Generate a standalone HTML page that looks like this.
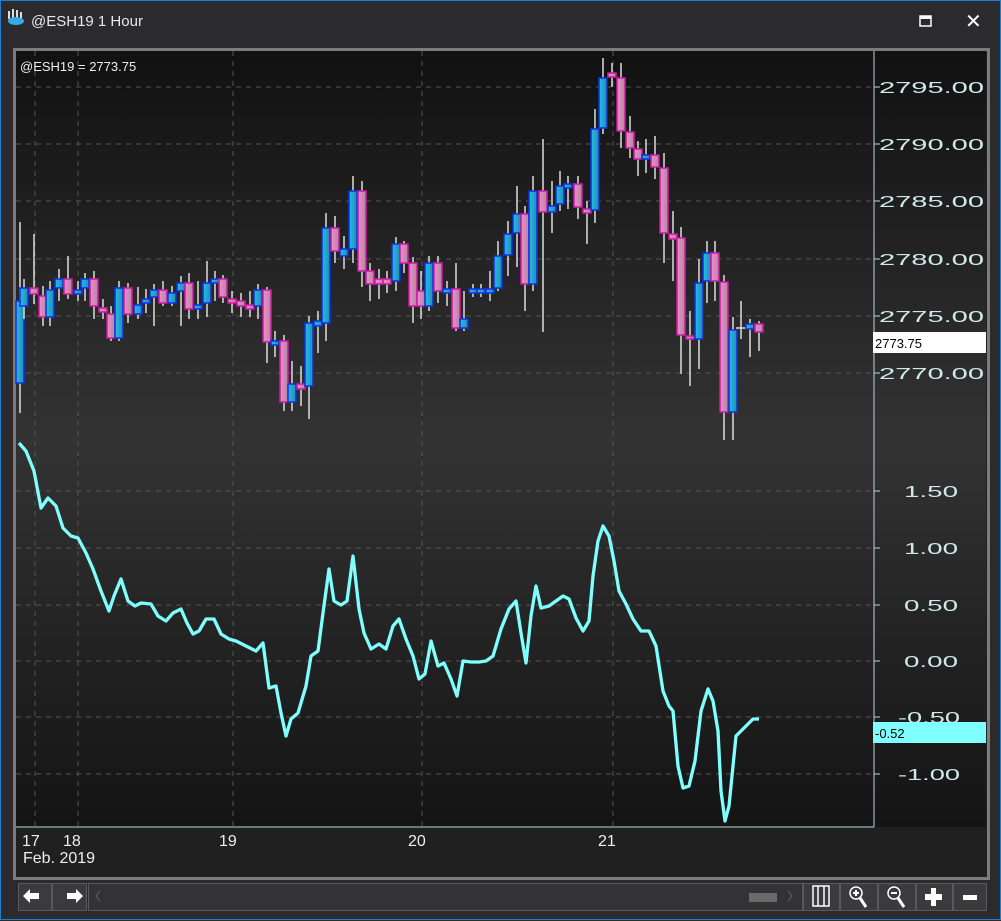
<!DOCTYPE html>
<html><head><meta charset="utf-8"><style>
*{margin:0;padding:0;box-sizing:border-box}
body{width:1001px;height:920px;background:#2b2b2d;font-family:"Liberation Sans",sans-serif;overflow:hidden;position:relative}
.win{position:absolute;left:0;top:0;width:1001px;height:920px;border:1px solid #1e7fd0;background:#2b2b2d}
.title{position:absolute;left:30px;top:12px;color:#e8e8e8;font-size:15px}
.frame{position:absolute;left:12px;top:47px;width:977px;height:832px;border:3px solid #7c7c7c;background:#222}
.tb{position:absolute;top:882px;height:28px;background:#3b3b3e;border:1px solid #5a5a5a;color:#fff}
</style></head><body><div class="win">
<svg style="position:absolute;left:5px;top:6px" width="20" height="22" viewBox="0 0 20 22"><path d="M3 4v8M7 2v10M11 3v9M15 5v7" stroke="#ddd" stroke-width="2"/><ellipse cx="10" cy="14" rx="8" ry="4" fill="#3aa8e8"/></svg>
<div class="title">@ESH19 1 Hour</div>
<svg style="position:absolute;left:918px;top:14px" width="14" height="14"><rect x="1" y="1" width="11" height="10" fill="none" stroke="#fff" stroke-width="1.5"/><rect x="1" y="1" width="11" height="3" fill="#fff"/></svg>
<div style="position:absolute;left:964px;top:8px;color:#fff;font-size:20px">✕</div>
<div class="frame"></div>
<svg id="c" style="position:absolute;left:0;top:0" width="1001" height="920">
<defs>
<linearGradient id="bg" x1="0" y1="0" x2="0" y2="1"><stop offset="0" stop-color="#111"/><stop offset="0.5" stop-color="#333"/><stop offset="1" stop-color="#141414"/></linearGradient>
<linearGradient id="bl" x1="0" x2="1"><stop offset="0" stop-color="#1cc0ec"/><stop offset="1" stop-color="#2a8ab0"/></linearGradient>
<linearGradient id="pk" x1="0" x2="1"><stop offset="0" stop-color="#f08cc8"/><stop offset="1" stop-color="#b08aa0"/></linearGradient>
</defs>
<rect x="15" y="50" width="858" height="776" fill="url(#bg)"/>
<rect x="873" y="50" width="112" height="776" fill="url(#bg)"/>
<rect x="15" y="826" width="970" height="50" fill="#202020"/>
<g id="grid" stroke="#555" stroke-dasharray="5,5" stroke-width="1"></g>
<g id="cand"></g>
<polyline id="ind" fill="none" stroke="#80ffff" stroke-width="3.3" stroke-linejoin="round"/>
<line x1="873" y1="50" x2="873" y2="826" stroke="#b8d8d8"/>
<line x1="15" y1="826" x2="873" y2="826" stroke="#b8d8d8"/>
<g id="ax" fill="#cfe8e8" font-size="16"></g>
<text x="19" y="70" fill="#eee" font-size="13">@ESH19 = 2773.75</text>
<rect x="872" y="331" width="113" height="21" fill="#fff"/>
<text x="874" y="347" fill="#000" font-size="13">2773.75</text>
<rect x="872" y="721" width="113" height="21" fill="#80ffff"/>
<text x="874" y="737" fill="#000" font-size="13">-0.52</text>
<g fill="#eee" font-size="16"><text x="21" y="845">17</text><text x="62" y="845">18</text><text x="218" y="845">19</text><text x="407" y="845">20</text><text x="597" y="845">21</text><text x="22" y="862">Feb. 2019</text></g>
</svg>
<div class="tb" style="left:17px;width:34px"></div>
<div class="tb" style="left:51px;width:35px"></div>
<div class="tb" style="left:87px;width:715px;background:#333336"></div>
<div style="position:absolute;left:748px;top:892px;width:28px;height:9px;background:#6a6a6a"></div>
<div class="tb" style="left:802px;width:37px"></div>
<div class="tb" style="left:839px;width:38px"></div>
<div class="tb" style="left:877px;width:38px"></div>
<div class="tb" style="left:915px;width:37px"></div>
<div class="tb" style="left:952px;width:34px"></div>
<svg style="position:absolute;left:0;top:880px" width="1001" height="32">
<g fill="#fff"><path d="M22 15l7-7v4h9v6h-9v4z"/><path d="M82 15l-7-7v4h-9v6h9v4z"/></g>
<path d="M99 10l-4 5 4 5" stroke="#666" fill="none"/><path d="M787 10l4 5-4 5" stroke="#666" fill="none"/>
<g stroke="#fff" fill="none" stroke-width="1.5"><rect x="812" y="5" width="16" height="20"/><line x1="817" y1="5" x2="817" y2="25"/><line x1="823" y1="5" x2="823" y2="25"/>
<circle cx="855" cy="12" r="6"/><line x1="859" y1="17" x2="865" y2="26" stroke-width="3"/><circle cx="893" cy="12" r="6"/><line x1="897" y1="17" x2="903" y2="26" stroke-width="3"/></g>
<g fill="#fff"><rect x="852" y="11" width="6" height="2"/><rect x="854" y="9" width="2" height="6"/><rect x="890" y="11" width="6" height="2"/><rect x="930" y="7" width="5" height="18"/><rect x="924" y="13" width="17" height="6"/><rect x="962" y="14" width="14" height="5"/></g>
</svg>
</div>
<script>
var ns="http://www.w3.org/2000/svg";
function el(p,t,a,txt){var e=document.createElementNS(ns,t);for(var k in a)e.setAttribute(k,a[k]);if(txt)e.textContent=txt;document.getElementById(p).appendChild(e);}
[86,143,200,258,315,372,490,547,604,660,716,773].forEach(function(y){el("grid","line",{x1:15,x2:873,y1:y,y2:y});});
[34,77,232,421,612].forEach(function(x){el("grid","line",{x1:x,x2:x,y1:50,y2:826});});
var lab=[[86,"2795.00"],[143,"2790.00"],[200,"2785.00"],[258,"2780.00"],[315,"2775.00"],[372,"2770.00"],[490,"1.50"],[547,"1.00"],[604,"0.50"],[660,"0.00"],[716,"-0.50"],[773,"-1.00"]];
lab.forEach(function(l,i){var w,x;if(i<6){x=878;w=105;}else if(l[1][0]=="-"){x=897;w=62;}else{x=903;w=54;}
el("ax","text",{x:x,y:l[0]+6,textLength:w,lengthAdjust:"spacingAndGlyphs"},l[1]);el("grid","line",{x1:873,x2:879,y1:l[0],y2:l[0],stroke:"#b8d8d8","stroke-dasharray":"none"});});
var C=[[19,300,382,1,221,412],[23,287,305,1,278,318],[33,287,293,0,233,303],[42,295,316,0,285,325],[49,289,316,1,280,325],[58,278,287,1,268,300],[67,278,293,0,255,298],[77,289,293,1,280,300],[84,278,287,1,272,300],[93,278,305,0,270,318],[102,307,311,0,298,318],[110,313,337,0,305,340],[118,287,337,1,280,340],[127,287,313,0,282,322],[137,304,313,1,286,318],[145,298,302,1,288,312],[153,289,296,1,283,325],[162,289,302,0,280,305],[171,292,302,1,285,305],[180,282,290,1,275,325],[188,282,308,0,272,318],[197,304,308,1,280,318],[206,282,302,1,260,316],[214,278,282,1,270,300],[222,278,296,0,274,302],[231,298,302,0,290,312],[240,300,305,0,292,316],[249,304,308,0,290,316],[257,289,305,1,283,318],[266,289,341,0,286,362],[274,340,344,1,330,356],[283,340,401,0,334,410],[291,383,401,1,360,410],[300,383,388,0,365,405],[308,322,385,1,315,418],[317,320,325,1,310,352],[325,227,322,1,212,340],[334,227,250,0,215,262],[343,248,255,1,235,268],[352,190,248,1,175,262],[361,190,270,0,180,286],[369,270,283,0,262,300],[378,278,283,0,268,298],[386,278,283,0,270,292],[395,243,280,1,236,290],[403,243,262,0,240,272],[412,262,305,0,256,322],[420,290,305,0,270,318],[428,262,305,1,255,310],[437,262,290,0,255,302],[446,288,292,1,280,305],[455,288,327,0,262,330],[463,318,327,1,290,330],[472,288,292,1,283,296],[480,288,292,1,283,296],[489,288,292,1,270,300],[497,255,287,1,240,290],[507,233,254,1,220,275],[516,213,232,1,185,266],[524,213,283,0,205,310],[532,190,283,1,175,290],[542,190,211,0,138,331],[551,205,211,1,180,232],[559,185,203,1,170,210],[567,183,187,1,175,208],[577,183,206,0,175,218],[586,208,212,0,200,243],[594,128,209,1,108,222],[602,77,127,1,57,133],[611,72,76,0,62,86],[620,77,130,0,62,147],[629,131,147,0,115,157],[637,148,158,0,140,175],[645,154,158,1,138,172],[654,154,166,0,135,178],[663,167,232,0,152,262],[672,233,238,0,210,280],[680,237,334,0,226,373],[689,335,338,0,310,385],[698,282,338,1,258,368],[706,252,280,1,240,302],[714,252,280,0,240,300],[723,281,411,0,274,439],[732,329,411,1,316,439],[740,327,327,2,300,338],[749,323,328,1,318,356],[758,323,331,0,320,350]];
C.forEach(function(c){var x=c[0];el("cand","line",{x1:x,x2:x,y1:c[4],y2:c[5],stroke:"#ddd","stroke-width":1.5});
if(c[3]==2){el("cand","line",{x1:x-5,x2:x+5,y1:c[1],y2:c[1],stroke:"#ddd","stroke-width":1.5});return;}
el("cand","rect",{x:x-4,y:c[1],width:8,height:Math.max(3,c[2]-c[1]),fill:c[3]?"url(#bl)":"url(#pk)",stroke:c[3]?"#1030e0":"#d018a8","stroke-width":1.5});});
var P=[[18,442],[25,450],[33,470],[40,507],[47,497],[55,505],[62,527],[70,535],[77,537],[85,552],[92,568],[100,590],[108,610],[113,595],[120,578],[127,600],[134,605],[140,602],[150,603],[157,615],[165,620],[172,612],[180,608],[186,622],[192,633],[198,630],[205,618],[213,618],[220,633],[228,638],[235,640],[245,645],[255,650],[262,642],[268,687],[275,685],[280,712],[285,735],[290,718],[297,712],[305,685],[310,655],[317,650],[322,612],[328,568],[333,600],[340,604],[346,600],[352,555],[358,608],[363,632],[370,648],[378,643],[385,648],[392,625],[398,618],[405,638],[412,655],[418,678],[424,673],[430,640],[437,665],[443,662],[450,678],[456,695],[462,660],[470,661],[478,661],[485,660],[492,655],[500,628],[508,608],[515,600],[520,632],[525,662],[530,615],[535,585],[540,607],[548,605],[555,600],[562,595],[568,598],[575,617],[582,630],[588,620],[592,575],[597,540],[602,525],[608,535],[613,560],[618,590],[625,603],[632,618],[640,630],[648,630],[655,645],[662,690],[668,705],[672,710],[677,765],[682,787],[688,785],[694,760],[700,710],[707,688],[712,700],[717,730],[720,790],[724,820],[728,805],[735,735],[745,725],[752,718],[758,718]];
document.getElementById("ind").setAttribute("points",P.map(function(p){return p.join(",")}).join(" "));
</script>
</body></html>
